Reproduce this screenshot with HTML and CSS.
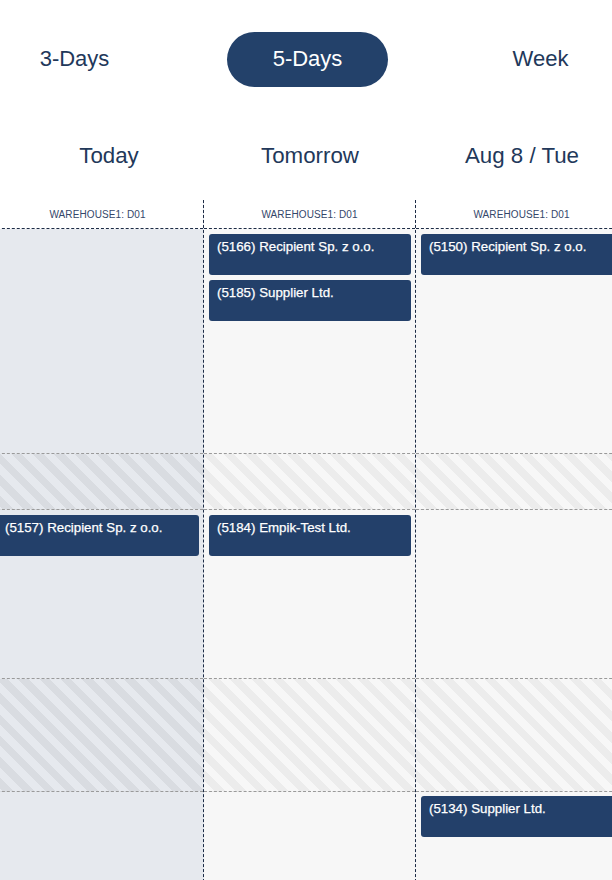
FILE: index.html
```html
<!DOCTYPE html>
<html>
<head>
<meta charset="utf-8">
<link rel="stylesheet" href="styles.css">
</head>
<body>
<div class="page">
  <nav class="tabs">
    <div class="tab">3-Days</div>
    <div class="tab active">5-Days</div>
    <div class="tab">Week</div>
  </nav>
  <div class="days">
    <div class="day day-first">Today</div>
    <div class="day">Tomorrow</div>
    <div class="day">Aug 8 / Tue</div>
  </div>
  <div class="cal">
    <div class="col col-today">
      <div class="wh">WAREHOUSE1: D01</div>
      <div class="slot slot-a"></div>
      <div class="slot slot-b hatch"></div>
      <div class="slot slot-c"><div class="card">(5157) Recipient Sp. z o.o.</div></div>
      <div class="slot slot-d hatch"></div>
      <div class="slot slot-e"></div>
    </div>
    <div class="col">
      <div class="wh">WAREHOUSE1: D01</div>
      <div class="slot slot-a">
        <div class="card">(5166) Recipient Sp. z o.o.</div>
        <div class="card">(5185) Supplier Ltd.</div>
      </div>
      <div class="slot slot-b hatch"></div>
      <div class="slot slot-c"><div class="card">(5184) Empik-Test Ltd.</div></div>
      <div class="slot slot-d hatch"></div>
      <div class="slot slot-e"></div>
    </div>
    <div class="col">
      <div class="wh">WAREHOUSE1: D01</div>
      <div class="slot slot-a"><div class="card">(5150) Recipient Sp. z o.o.</div></div>
      <div class="slot slot-b hatch"></div>
      <div class="slot slot-c"></div>
      <div class="slot slot-d hatch"></div>
      <div class="slot slot-e"><div class="card">(5134) Supplier Ltd.</div></div>
    </div>
  </div>
</div>
</body>
</html>
```

FILE: styles.css
```css
html, body {
  margin: 0;
  padding: 0;
  background: #ffffff;
  overflow: hidden;
}
body {
  font-family: "Liberation Sans", Arial, sans-serif;
  color: #22385a;
  width: 612px;
  height: 880px;
}
.page {
  width: 612px;
  height: 880px;
  overflow: hidden;
}
.tabs {
  display: flex;
  gap: 72px;
  margin-left: -6px;
  padding-top: 32px;
  height: 55px;
}
.tab {
  flex: 0 0 161px;
  height: 55px;
  border-radius: 28px;
  display: flex;
  align-items: center;
  justify-content: center;
  font-size: 22px;
  color: #22385a;
  padding-bottom: 1px;
  box-sizing: border-box;
}
.tab.active {
  background: #23416a;
  color: #ffffff;
}
.days {
  display: grid;
  grid-template-columns: 212px 212px 212px;
  margin-left: -8px;
  padding-top: 57px;
  height: 56px;
  width: 636px;
}
.day {
  text-align: center;
  font-size: 22.3px;
  line-height: 24px;
  color: #22385a;
}
.day-first {
  padding-left: 22px;
}
.cal {
  display: grid;
  grid-template-columns: 212px 212px 212px;
  margin-left: -8px;
  width: 636px;
}
.col {
  border-right: 1px dashed #1c2b45;
  background: #f7f7f7;
  display: flex;
  flex-direction: column;
}
.col-today {
  background: #e6e9ee;
}
.wh {
  background: #ffffff;
  height: 28px;
  border-bottom: 1px dashed #1c2b45;
  font-size: 10px;
  letter-spacing: 0.1px;
  line-height: 29px;
  text-align: center;
  color: #34476a;
}
.slot {
  border-bottom: 1px dashed #9a9a9a;
  display: flex;
  flex-direction: column;
  gap: 5px;
  padding: 5px 4px 0 5px;
  box-sizing: border-box;
}
.slot-a { height: 225px; }
.slot-b { height: 56px; }
.slot-c { height: 169px; }
.slot-d { height: 113px; }
.slot-e { height: 120px; border-bottom: none; padding-top: 4px; }
.hatch {
  background: repeating-linear-gradient(45deg, #f7f7f7 0 7.5px, #ececec 7.5px 15px);
}
.col-today .hatch {
  background: repeating-linear-gradient(45deg, #e6e9ee 0 7.5px, #d9dce1 7.5px 15px);
}
.card {
  background: #23406a;
  color: #ffffff;
  border-radius: 3px;
  height: 41px;
  box-sizing: border-box;
  padding: 5px 8px 0 8px;
  font-size: 13.3px;
  line-height: 16px;
  white-space: nowrap;
  overflow: hidden;
  -webkit-text-stroke: 0.25px #ffffff;
}
```
